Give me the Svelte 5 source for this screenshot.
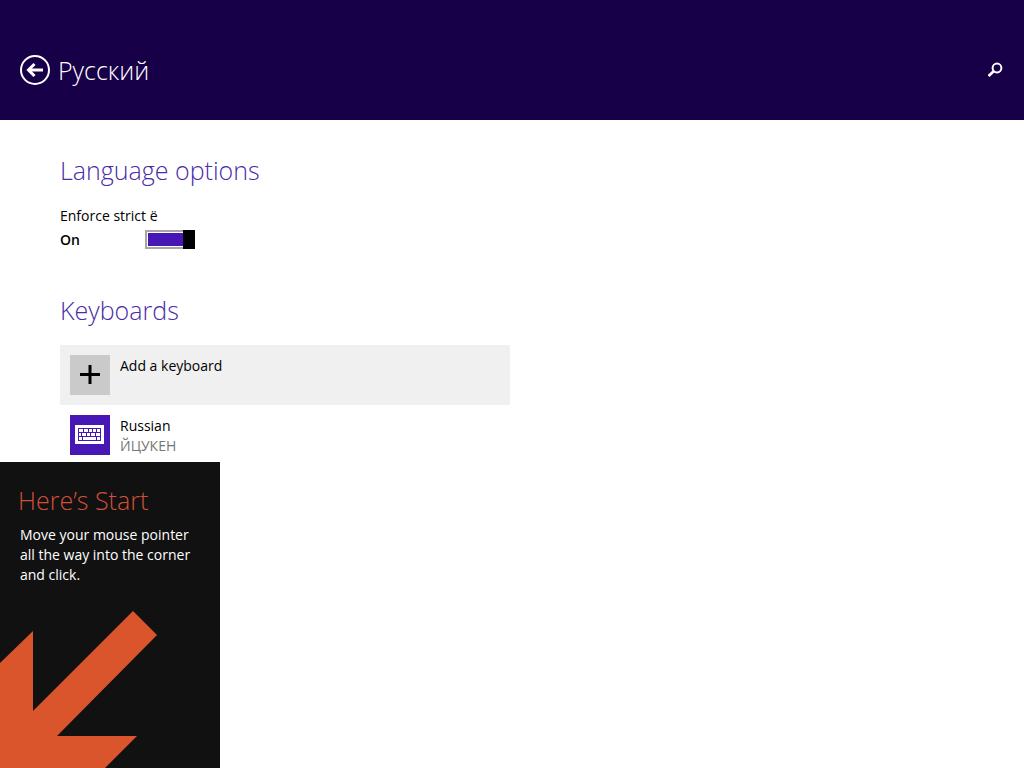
<script>
  let strictYo = $state(true);

  const keyboards = [
    { name: 'Russian', layout: 'ЙЦУКЕН' }
  ];
</script>

<header class="header">
  <button class="icon-button" type="button" aria-label="Back">
    <svg width="30" height="30" viewBox="0 0 30 30" fill="none" stroke="#fff">
      <circle cx="15" cy="15" r="14" stroke-width="2" />
      <path d="M8.5 15H23" stroke-width="3" />
      <path d="M14.5 9L8.5 15L14.5 21" stroke-width="3" />
    </svg>
  </button>
  <h1>Русский</h1>
  <button class="icon-button search" type="button" aria-label="Search">
    <svg width="16" height="16" viewBox="0 0 16 16" fill="none" stroke="#fff">
      <circle cx="9" cy="6" r="4.4" stroke-width="2" />
      <path d="M5.6 9.2L0.6 14" stroke-width="2.6" />
    </svg>
  </button>
</header>

<main class="content">
  <section class="options">
    <h2>Language options</h2>
    <label class="setting-label" for="strict-yo">Enforce strict ё</label>
    <div class="setting-row">
      <span class="setting-state">{strictYo ? 'On' : 'Off'}</span>
      <input id="strict-yo" class="toggle" type="checkbox" role="switch" bind:checked={strictYo} />
    </div>
  </section>

  <section>
    <h2>Keyboards</h2>
    <div class="keyboard-list">
      <button class="keyboard add" type="button">
        <span class="tile">
          <svg width="40" height="40" viewBox="0 0 40 40" stroke="#000" stroke-width="3">
            <path d="M10 19.5H30M20 10V29" />
          </svg>
        </span>
        <span class="keyboard-name">Add a keyboard</span>
      </button>
      {#each keyboards as keyboard}
        <button class="keyboard" type="button">
          <span class="tile">
            <svg width="40" height="40" viewBox="0 0 40 40">
              <rect x="5" y="10" width="29" height="19" fill="#fff" />
              <g fill="none" stroke="#4617b4" stroke-width="1">
                <rect x="8.5" y="13.5" width="22" height="12" />
                <path d="M8.5 17.5H30.5M8.5 21.5H30.5" />
                <path d="M13.5 13.5V17.5M18.5 13.5V17.5M22.5 13.5V17.5M26.5 13.5V17.5" />
                <path d="M11.5 17.5V21.5M16.5 17.5V21.5M20.5 17.5V21.5M25.5 17.5V21.5" />
                <path d="M12.5 21.5V25.5M26.5 21.5V25.5" />
              </g>
            </svg>
          </span>
          <span class="keyboard-name">
            {keyboard.name}
            <span class="keyboard-layout">{keyboard.layout}</span>
          </span>
        </button>
      {/each}
    </div>
  </section>
</main>

<aside class="tip">
  <h2>Here’s Start</h2>
  <p>Move your mouse pointer all the way into the corner and click.</p>
  <svg class="tip-arrow" width="158" height="158" viewBox="0 0 158 158" fill="#da552c">
    <path d="M0 53L33 21V101L133 1L157 25L57 126H137L105 158H0Z" />
  </svg>
</aside>

<style>
  :global(body) {
    background: #fff;
    color: #000;
    font-family: "Segoe UI", "Open Sans", "Noto Sans", sans-serif;
    font-size: 14px;
    line-height: 20px;
  }

  h1,
  h2,
  p {
    margin: 0;
  }

  h1,
  h2 {
    font-size: 25px;
    font-weight: 300;
    line-height: 40px;
  }

  button {
    padding: 0;
    border: none;
    background: none;
    color: inherit;
    font: inherit;
    text-align: left;
    cursor: pointer;
  }

  svg {
    display: block;
  }

  .header {
    display: flex;
    align-items: center;
    gap: 8px;
    box-sizing: border-box;
    height: 120px;
    padding: 20px 20px 0;
    background: #180048;
    color: #fff;
  }

  .search {
    margin-left: auto;
  }

  .content {
    display: flex;
    flex-direction: column;
    gap: 40px;
    max-width: 450px;
    padding: 30px 60px;
  }

  .content h2 {
    color: #4a2ba8;
  }

  .setting-label {
    display: block;
    margin-top: 16px;
  }

  .setting-row {
    display: flex;
    align-items: flex-start;
    margin-top: 4px;
  }

  .setting-state {
    width: 85px;
    font-weight: 600;
  }

  .toggle {
    appearance: none;
    display: flex;
    justify-content: flex-start;
    box-sizing: border-box;
    width: 50px;
    height: 19px;
    margin: 0;
    padding: 1px;
    border: 2px solid #a6a6a6;
    background: #fff;
    background-clip: content-box;
    cursor: pointer;
  }

  .toggle::before {
    content: "";
    width: 12px;
    margin: -3px;
    background: #000;
  }

  .toggle:checked {
    justify-content: flex-end;
    background-color: #4617b4;
  }

  .keyboard-list {
    margin-top: 15px;
  }

  .keyboard {
    display: flex;
    align-items: flex-start;
    gap: 10px;
    width: 100%;
    height: 60px;
    padding: 10px;
  }

  .keyboard.add {
    background: #f0f0f0;
  }

  .keyboard-name {
    padding-top: 1px;
  }

  .tile {
    width: 40px;
    height: 40px;
    background: #4617b4;
  }

  .add .tile {
    background: #cacaca;
  }

  .keyboard-layout {
    display: block;
    color: #767676;
  }

  .tip {
    position: fixed;
    bottom: 0;
    left: 0;
    width: 220px;
    background: #111;
    color: #fff;
  }

  .tip h2 {
    padding: 18px 18px 0;
    color: #d2503a;
  }

  .tip p {
    padding: 5px 20px 25px;
  }
</style>
